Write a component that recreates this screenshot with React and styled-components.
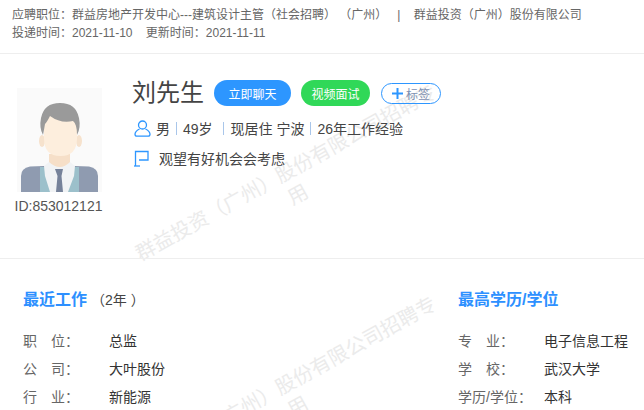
import React from 'react'
import styled, { createGlobalStyle } from 'styled-components'

const GlobalStyle = createGlobalStyle`
  html, body {
    margin: 0;
    padding: 0;
    background: #fff;
    overflow: hidden;
  }
  body {
    font-family: 'Liberation Sans', 'Noto Sans CJK SC', sans-serif;
  }
`

const Page = styled.div`
  position: relative;
  width: 644px;
  height: 410px;
  overflow: hidden;
  background: #fff;
  color: #333;
`
const Content = styled.div`
  position: relative;
`
const ApplyBar = styled.div`
  height: 54px;
  box-sizing: border-box;
  padding: 6px 0 0 12px;
  border-bottom: 1px solid #eee;
  font-size: 12px;
  line-height: 18px;
  color: #666;
  white-space: pre;
`
const Profile = styled.div`
  display: flex;
  height: 205px;
  box-sizing: border-box;
  border-bottom: 1px solid #eee;
  padding: 20px 0 0 17px;
`
const AvatarCol = styled.div`
  display: flex;
  flex-direction: column;
  align-items: center;
  width: 85px;
  padding-top: 14px;
`
const AvatarBox = styled.div`
  width: 85px;
  height: 104px;
  background: #fafafa;
`
const IdText = styled.div`
  margin: 6px 2px 0 0;
  font-size: 14px;
  line-height: 17px;
  color: #555;
  white-space: nowrap;
`
const Info = styled.div`
  margin-left: 30px;
`
const NameRow = styled.div`
  display: flex;
  align-items: center;
  height: 38px;
`
const Name = styled.div`
  font-size: 24px;
  line-height: 36px;
  color: #444;
  width: 82px;
`
const Pill = styled.div`
  display: flex;
  align-items: center;
  justify-content: center;
  width: ${(p) => p.$w}px;
  height: 26px;
  margin-right: 10px;
  border-radius: 13px;
  background: ${(p) => p.$bg};
  color: #fff;
  font-size: 12px;
  white-space: nowrap;
`
const TagButton = styled.div`
  display: flex;
  align-items: center;
  justify-content: center;
  gap: 3px;
  width: 60px;
  height: 21px;
  box-sizing: border-box;
  margin-left: 1px;
  border: 1px solid #2d96ff;
  border-radius: 11px;
  color: #7d8fb0;
  font-size: 12px;
`
const MetaRow = styled.div`
  display: flex;
  align-items: center;
  height: 20px;
  margin-top: ${(p) => p.$top}px;
  padding-left: 2px;
  font-size: 14px;
  color: #444;
  white-space: pre;
`
const Gender = styled.span`
  margin-left: 5px;
`
const Sep = styled.span`
  width: 1px;
  height: 13px;
  margin: 0 ${(p) => p.$r || 6}px 0 ${(p) => p.$l || 6}px;
  background: #a9c6ea;
`
const FlagText = styled.span`
  margin-left: 10px;
`
const Details = styled.div`
  display: flex;
  justify-content: space-between;
  padding: 31px 0 0 23px;
`
const Column = styled.div`
  width: ${(p) => p.$w}px;
`
const Heading = styled.div`
  display: flex;
  align-items: baseline;
  height: 20px;
  margin-bottom: 16px;
  font-size: 16px;
  line-height: 20px;
  font-weight: 700;
  color: #2d90ff;
`
const Years = styled.span`
  margin-left: 4px;
  font-size: 14px;
  font-weight: 400;
  color: #444;
`
const Row = styled.div`
  display: grid;
  grid-template-columns: 86px 1fr;
  height: 28px;
  align-items: center;
  font-size: 14px;
  white-space: pre;
`
const Label = styled.span`
  color: #666;
`
const Value = styled.span`
  color: #333;
`
const Watermark = styled.div`
  position: absolute;
  left: 122px;
  top: ${(p) => p.$y}px;
  width: 340px;
  font-size: 20px;
  line-height: 25px;
  text-align: center;
  color: #ebebeb;
  transform: rotate(-29deg);
  pointer-events: none;
`

const Avatar = () => (
  <svg width="85" height="104" viewBox="0 0 85 104">
    <path d="M4 104V88q0-8 9-9.500L27 78h31l14 .5q9 1.500 9 9.500v16z" fill="#8f9bb0" />
    <path d="M23 79h10l6 25H23z" fill="#9cc0cb" />
    <path d="M62 79H52l-6 25h16z" fill="#9cc0cb" />
    <path d="M27 78l5-4h21l5 4-1 10-6 16H33l-5-16z" fill="#f1f3f5" />
    <path d="M32 66h21v8q-10 10-21 0z" fill="#f6dfc8" />
    <path d="M38 81h8l-1.500 7 1.500 16h-7l1.500-16z" fill="#76829a" />
    <ellipse cx="25" cy="53" rx="3" ry="6" fill="#f6e2cd" />
    <ellipse cx="62" cy="53" rx="3" ry="6" fill="#f6e2cd" />
    <path d="M27 32q0-12 16.500-12T60 32v18q0 18-16.500 18T27 50z" fill="#fdeedd" />
    <path d="M26 47q-4-7-2-17 3-15 19-15t19 15q2 10-2 17 0-11-4-14-12 3-23-5-3 6-5 8-1 6-2 11z" fill="#9a9a9a" />
  </svg>
)

const UserIcon = () => (
  <svg width="17" height="17" viewBox="0 0 17 17" fill="none" stroke="#2d96ff" strokeWidth="1.3">
    <circle cx="8.500" cy="5" r="4" />
    <path d="M5.500 9C3 10.200 1 12 1 14.300q0 1.900 2 1.900h11q2 0 2-1.900C16 12 14 10.200 11.500 9" />
  </svg>
)

const FlagIcon = () => (
  <svg width="15" height="17" viewBox="0 0 15 17" fill="none" stroke="#2d96ff" strokeWidth="1.3">
    <path d="M1.500 16V1.500H14V10H5" />
    <path d="M0 16h6" />
  </svg>
)

const PlusIcon = () => (
  <svg width="11" height="11" viewBox="0 0 11 11" stroke="#2d96ff" strokeWidth="2">
    <path d="M5.500 0v11M0 5.500h11" />
  </svg>
)

const WATERMARK = '群益投资（广州）股份有限公司招聘专用'

export default function App() {
  return (
    <Page>
      <GlobalStyle />
      <Watermark $y={159}>{WATERMARK}</Watermark>
      <Watermark $y={371}>{WATERMARK}</Watermark>
      <Content>
        <ApplyBar>
          <div>{'应聘职位：群益房地产开发中心---建筑设计主管（社会招聘） （广州）   |    群益投资（广州）股份有限公司'}</div>
          <div>{'投递时间：2021-11-10    更新时间：2021-11-11'}</div>
        </ApplyBar>
        <Profile>
          <AvatarCol>
            <AvatarBox>
              <Avatar />
            </AvatarBox>
            <IdText>ID:853012121</IdText>
          </AvatarCol>
          <Info>
            <NameRow>
              <Name>刘先生</Name>
              <Pill $w={77} $bg="#2d96ff">立即聊天</Pill>
              <Pill $w={69} $bg="#30d858">视频面试</Pill>
              <TagButton>
                <PlusIcon />
                标签
              </TagButton>
            </NameRow>
            <MetaRow $top={6}>
              <UserIcon />
              <Gender>男</Gender>
              <Sep />
              <span>49岁</span>
              <Sep $l={10} $r={7} />
              <span>现居住 宁波</span>
              <Sep />
              <span>26年工作经验</span>
            </MetaRow>
            <MetaRow $top={10}>
              <FlagIcon />
              <FlagText>观望有好机会会考虑</FlagText>
            </MetaRow>
          </Info>
        </Profile>
        <Details>
          <Column $w={300}>
            <Heading>
              最近工作<Years>（2年 ）</Years>
            </Heading>
            <Row><Label>职　位：</Label><Value>总监</Value></Row>
            <Row><Label>公　司：</Label><Value>大叶股份</Value></Row>
            <Row><Label>行　业：</Label><Value>新能源</Value></Row>
          </Column>
          <Column $w={186}>
            <Heading>最高学历/学位</Heading>
            <Row><Label>专　业：</Label><Value>电子信息工程</Value></Row>
            <Row><Label>学　校：</Label><Value>武汉大学</Value></Row>
            <Row><Label>学历/学位：</Label><Value>本科</Value></Row>
          </Column>
        </Details>
      </Content>
    </Page>
  )
}
